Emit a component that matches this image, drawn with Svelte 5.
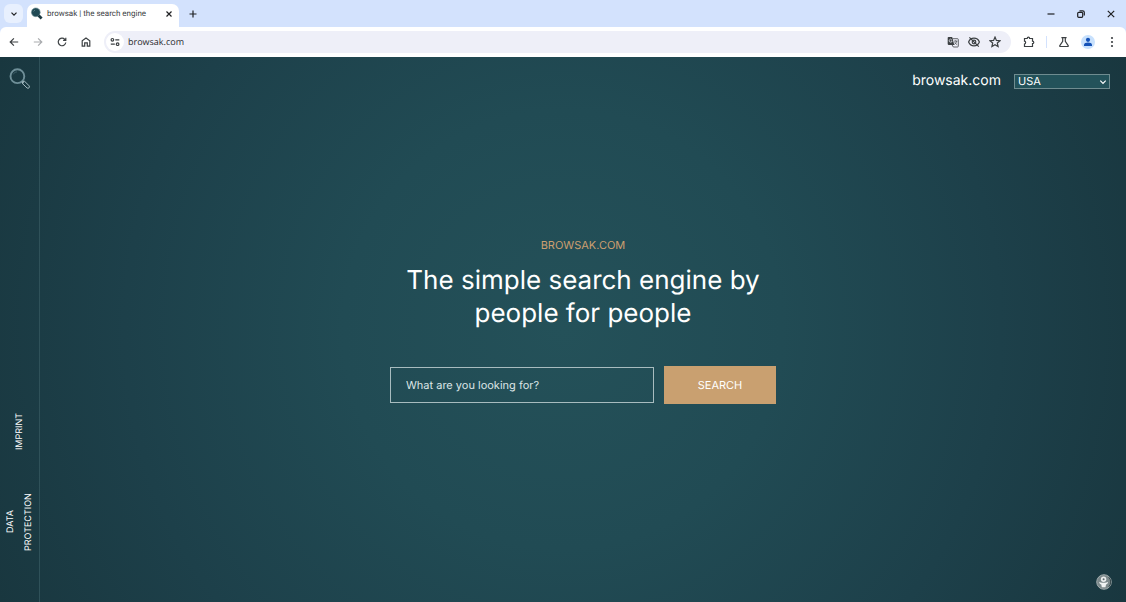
<script lang="ts">
  let country = $state("USA");
  let query = $state("");

  const countries = ["USA", "Germany", "France", "Spain", "Italy"];
</script>

<div class="browser">
  <header class="tabs">
    <button class="tab-search" aria-label="Search tabs">
      <svg width="8" height="8" viewBox="0 0 8 8"><path d="M1.5 2.7 4 5.2l2.5-2.5" /></svg>
    </button>
    <div class="tab">
      <svg class="favicon" width="14" height="14" viewBox="0 0 14 14">
        <circle cx="5.8" cy="5.3" r="4.4" fill="#214a55" stroke="#74939a" stroke-width=".6" />
        <path d="m8.6 8.4 3 3" stroke="#1b3942" stroke-width="2.8" />
        <path d="M3.5 4.5 5 3" stroke="#6d9196" stroke-width=".7" />
      </svg>
      <span class="tab-title">browsak | the search engine</span>
      <button class="icon close" aria-label="Close tab">
        <svg width="8" height="8" viewBox="0 0 8 8"><path d="m1.5 1.5 5 5m0-5-5 5" /></svg>
      </button>
    </div>
    <button class="icon new-tab" aria-label="New tab">
      <svg width="10" height="10" viewBox="0 0 10 10"><path d="M5 1.5v7M1.5 5h7" /></svg>
    </button>
    <div class="window-controls">
      <button class="icon" aria-label="Minimize">
        <svg width="10" height="10" viewBox="0 0 10 10"><path d="M1.5 5h7" /></svg>
      </button>
      <button class="icon" aria-label="Restore">
        <svg width="10" height="10" viewBox="0 0 10 10">
          <rect x="1.7" y="3.3" width="5" height="5" rx="1" />
          <path d="M3.5 1.8h3.2c1 0 1.6.6 1.6 1.6v3.1" />
        </svg>
      </button>
      <button class="icon" aria-label="Close window">
        <svg width="10" height="10" viewBox="0 0 10 10"><path d="m1.8 1.8 6.4 6.4m0-6.4L1.8 8.2" /></svg>
      </button>
    </div>
  </header>

  <div class="toolbar">
    <nav class="history">
      <button class="icon" aria-label="Back">
        <svg width="12" height="12" viewBox="0 0 12 12"><path d="M10.2 6H2.3m3.6-3.7L2.2 6l3.7 3.7" /></svg>
      </button>
      <button class="icon" aria-label="Forward" disabled>
        <svg width="12" height="12" viewBox="0 0 12 12"><path d="M1.8 6h7.9M6.1 2.3 9.8 6 6.1 9.7" /></svg>
      </button>
      <button class="icon" aria-label="Reload">
        <svg width="12" height="12" viewBox="0 0 12 12">
          <path d="M9.8 6.5A3.8 3.8 0 1 1 8.8 3.3L9.8 4.3M9.8 1.7v2.7H7.1" />
        </svg>
      </button>
      <button class="icon" aria-label="Home">
        <svg width="12" height="12" viewBox="0 0 12 12">
          <path d="M2.2 10.2V4.8L6 1.9l3.8 2.9v5.4H7.3V6.9H4.7v3.3z" />
        </svg>
      </button>
    </nav>

    <div class="address">
      <button class="site-info" aria-label="View site information">
        <svg width="10" height="10" viewBox="0 0 10 10">
          <circle cx="2.4" cy="2.8" r="1.3" />
          <path d="M5.3 2.8h4M.8 7.2h4" />
          <circle cx="7.6" cy="7.2" r="1.3" />
        </svg>
      </button>
      <input class="url" type="text" aria-label="Address" value="browsak.com" />
      <button class="icon" aria-label="Translate this page">
        <svg width="12" height="12" viewBox="0 0 12 12">
          <path d="M5.5 2.7h5c.5 0 .8.3.8.8v6.7c0 .5-.3.8-.8.8H6.3L5 8.8" stroke-width=".8" />
          <path class="solid" d="M1.5.9h3.7l2.1 8H1.5c-.5 0-.8-.3-.8-.8V1.7c0-.5.3-.8.8-.8z" />
          <path d="M4.8 3.8A1.5 1.5 0 1 0 5.1 5H3.8" stroke="#eeeff8" stroke-width=".7" />
          <path d="M7 5.1h3.4M8.6 4.4v.7m1.1 0C9.4 6.6 8.6 7.6 7.3 8.4m.4-2.2c.5 1 1.3 1.8 2.4 2.5" stroke-width=".7" />
        </svg>
      </button>
      <button class="icon" aria-label="Third-party cookies blocked">
        <svg width="12" height="12" viewBox="0 0 12 12">
          <path d="M.6 6C1.6 3.5 3.7 2.2 6 2.2S10.4 3.5 11.4 6C10.4 8.5 8.3 9.8 6 9.8S1.6 8.5.6 6z" />
          <circle cx="6" cy="6" r="1.8" />
          <path d="m1.4 1.3 9.4 9.4" />
        </svg>
      </button>
      <button class="icon" aria-label="Bookmark this tab">
        <svg width="12" height="12" viewBox="0 0 12 12">
          <path d="m6 1.1 1.4 3.3 3.6.3L8.3 7l.8 3.6L6 8.7l-3.1 1.9L3.7 7 1 4.7l3.6-.3z" />
        </svg>
      </button>
    </div>

    <div class="actions">
      <button class="icon" aria-label="Extensions">
        <svg width="12" height="12" viewBox="0 0 12 12">
          <path d="M1.5 2.5h2.7c0-1.8 2.4-1.8 2.4 0h2.9v2.7c1.7 0 1.7 2.4 0 2.4v2.9h-8V8c1.5-.2 1.5-2.6 0-2.8z" />
        </svg>
      </button>
      <span class="divider"></span>
      <button class="icon" aria-label="Labs">
        <svg width="12" height="12" viewBox="0 0 12 12">
          <path d="M3.4 1.6h5.2M4.7 1.8v3.6L1.8 9.6c-.3.5 0 .9.5.9h7.4c.5 0 .8-.4.5-.9L7.3 5.4V1.8" />
        </svg>
      </button>
      <button class="profile" aria-label="Profile">
        <svg width="14" height="14" viewBox="0 0 14 14">
          <circle cx="7" cy="7" r="7" fill="#c8e1fd" />
          <circle cx="7" cy="4.8" r="2.1" fill="#1552b8" />
          <path d="M3 10.9V9.7c0-1.3 2-2.1 4-2.1s4 .8 4 2.1v1.2z" fill="#1552b8" />
        </svg>
      </button>
      <button class="icon" aria-label="Menu">
        <svg width="12" height="12" viewBox="0 0 12 12">
          <g class="solid">
            <circle cx="6" cy="2" r="1.1" />
            <circle cx="6" cy="6" r="1.1" />
            <circle cx="6" cy="10" r="1.1" />
          </g>
        </svg>
      </button>
    </div>
  </div>

  <div class="page">
    <aside class="sidebar">
      <a class="logo" href="#home" aria-label="browsak home">
        <svg width="22" height="22" viewBox="0 0 22 22">
          <circle cx="8.4" cy="8.2" r="6.9" stroke="#6f8f98" stroke-width="1.9" />
          <path d="M4.2 6.4C5 4.8 6.3 4 8 3.9" stroke="#476a74" stroke-width=".8" />
          <path d="m13 13.2 1.7 1.7" stroke="#8ba5ac" stroke-width="1.4" />
          <path d="m12.9 15 2.2-2.2 5.1 5.1c1 1.3-.8 3.1-2.1 2.1z" stroke="#a5bbc0" stroke-width="1" />
        </svg>
      </a>
      <nav class="legal">
        <a href="#imprint">IMPRINT</a>
        <a href="#data-protection">DATA PROTECTION</a>
      </nav>
    </aside>

    <div class="content">
      <header class="topbar">
        <a class="brand" href="#home">browsak.com</a>
        <div class="country">
          <select aria-label="Country" bind:value={country}>
            {#each countries as c}
              <option>{c}</option>
            {/each}
          </select>
          <svg width="8" height="8" viewBox="0 0 8 8"><path d="M1.3 2.6 4 5.3l2.7-2.7" /></svg>
        </div>
      </header>

      <main class="hero">
        <p class="eyebrow">BROWSAK.COM</p>
        <h1>The simple search engine by people for people</h1>
        <form class="search" onsubmit={(e) => e.preventDefault()}>
          <input
            type="text"
            aria-label="Search query"
            placeholder="What are you looking for?"
            bind:value={query}
          />
          <button type="submit">SEARCH</button>
        </form>
      </main>
    </div>

    <button class="badge" aria-label="Privacy settings">
      <svg width="16" height="16" viewBox="0 0 16 16">
        <circle cx="8" cy="8" r="7.3" fill="#7b888a" stroke="#a7b1b2" stroke-width=".9" />
        <path d="M12.8 3.2a7 7 0 0 1 0 9.6" stroke="#36474b" stroke-width="1" />
        <circle cx="7.6" cy="5.2" r="2.7" fill="#eceeee" />
        <circle cx="7.6" cy="5.2" r="1" fill="#5d6b6e" />
        <path d="M3.1 7.7c1.3 1.3 7.7 1.3 9 0-.2 1.8-1.2 2.4-2.1 2.9l-.5 2.6H5.8l-.5-2.6C4.3 10.1 3.3 9.5 3.1 7.7z" fill="#f1f3f3" />
      </svg>
    </button>
  </div>
</div>

<style>
  :global(body) {
    margin: 0;
  }
  .browser {
    display: flex;
    flex-direction: column;
    min-height: 100vh;
    font-family: Inter, "Liberation Sans", sans-serif;
    text-rendering: geometricPrecision;
    color: #fff;
    background: #d3e2fd;
  }
  button,
  input,
  select {
    text-rendering: inherit;
  }
  button {
    border: 0;
    padding: 0;
    background: none;
    font: inherit;
    color: inherit;
    cursor: pointer;
  }
  a {
    color: inherit;
    text-decoration: none;
  }
  svg {
    display: block;
    fill: none;
  }
  .icon {
    display: grid;
    place-items: center;
    color: #3c4043;
  }
  .icon svg,
  .tab-search svg,
  .site-info svg,
  .country svg {
    stroke: currentColor;
    stroke-width: 1.2;
  }
  .icon:disabled {
    color: #a9abae;
  }
  .solid {
    fill: currentColor;
    stroke: none;
  }

  /* tab strip */
  .tabs {
    display: flex;
    align-items: center;
    height: 27px;
    color: #1f2023;
  }
  .tab-search {
    display: grid;
    place-items: center;
    width: 19px;
    height: 19px;
    margin-left: 4px;
    border-radius: 6px;
    background: #e8f0fe;
  }
  .tab {
    display: flex;
    align-items: center;
    align-self: flex-end;
    box-sizing: border-box;
    width: 152px;
    height: 23px;
    margin-left: 4px;
    padding: 0 6px 3px 3px;
    border-radius: 7px 7px 0 0;
    background: #fff;
  }
  .tab-title {
    flex: 1;
    margin-left: 3px;
    font: 8px/12px Roboto, "Noto Sans", sans-serif;
    color: #3c4043;
    white-space: nowrap;
  }
  .close,
  .new-tab,
  .window-controls .icon {
    color: #1f2023;
  }
  .new-tab {
    margin-left: 9px;
  }
  .window-controls {
    display: flex;
    gap: 20px;
    margin-left: auto;
    padding-right: 10px;
  }

  /* toolbar */
  .toolbar {
    display: flex;
    align-items: center;
    height: 30px;
    border-radius: 6px 6px 0 0;
    background: #fff;
  }
  .history {
    display: flex;
    gap: 12px;
    padding: 0 12px 0 8px;
  }
  .address {
    display: flex;
    flex: 1;
    align-items: center;
    gap: 9px;
    height: 22px;
    padding: 0 10px 0 2px;
    border-radius: 11px;
    background: #eeeff8;
  }
  .site-info {
    display: grid;
    place-items: center;
    width: 18px;
    height: 18px;
    border-radius: 50%;
    background: #fff;
    color: #3c4043;
  }
  .url {
    flex: 1;
    min-width: 0;
    margin-left: -5px;
    padding: 0;
    border: 0;
    background: none;
    font: 9px/14px "Open Sans", "Noto Sans", sans-serif;
    color: #2b2c30;
    outline: none;
  }
  .actions {
    display: flex;
    align-items: center;
    gap: 11px;
    padding: 0 8px 0 12px;
  }
  .divider {
    width: 1px;
    height: 12px;
    background: #d3e2fd;
  }

  /* page */
  .page {
    position: relative;
    display: flex;
    flex: 1;
    background: radial-gradient(circle at 50% 50%, #245159 0%, #214b54 35%, #1d404a 70%, #19373f 100%);
  }
  .sidebar {
    display: flex;
    flex-direction: column;
    align-items: center;
    justify-content: space-between;
    box-sizing: border-box;
    width: 40px;
    padding: 11px 0 48px;
    border-right: 1px solid #2f5159;
  }
  .legal {
    display: flex;
    flex-direction: column;
    align-items: center;
    gap: 40px;
    font-size: 9px;
    line-height: 18px;
  }
  .legal a {
    max-height: 64px;
    writing-mode: vertical-rl;
    transform: rotate(180deg);
    text-align: center;
  }
  .content {
    display: flex;
    flex: 1;
    flex-direction: column;
  }
  .topbar {
    display: flex;
    align-items: center;
    justify-content: flex-end;
    gap: 13px;
    padding: 15px 16px 0 0;
  }
  .brand {
    font-size: 14px;
    line-height: 18px;
  }
  .country {
    position: relative;
  }
  .country select {
    display: block;
    appearance: none;
    width: 96px;
    height: 15px;
    padding: 0 16px 0 3px;
    border: 1px solid #6f8c90;
    border-radius: 0;
    background: #23525a;
    color: #fff;
    font: 11px/13px Inter, sans-serif;
  }
  .country option {
    background: #23525a;
  }
  .country svg {
    position: absolute;
    top: 4px;
    right: 3px;
    pointer-events: none;
  }
  .hero {
    display: flex;
    flex: 1;
    flex-direction: column;
    align-items: center;
    justify-content: center;
    padding-bottom: 50px;
  }
  .eyebrow {
    margin: 0;
    font-size: 11px;
    line-height: 14px;
    color: #cb9f70;
  }
  h1 {
    max-width: 386px;
    margin: 12px 0 36px;
    font-size: 26px;
    line-height: 33px;
    font-weight: 400;
    text-align: center;
  }
  .search {
    display: flex;
    align-items: center;
    gap: 10px;
  }
  .search input {
    box-sizing: border-box;
    width: 264px;
    height: 36px;
    padding: 0 15px;
    border: 1px solid #a8bcbf;
    background: transparent;
    color: #fff;
    font: 11px/14px Inter, sans-serif;
    outline: none;
  }
  .search input::placeholder {
    color: #dce5e6;
  }
  .search button {
    width: 112px;
    height: 38px;
    background: #c9a070;
    font-size: 11px;
  }
  .badge {
    position: absolute;
    right: 14px;
    bottom: 12px;
  }
</style>
